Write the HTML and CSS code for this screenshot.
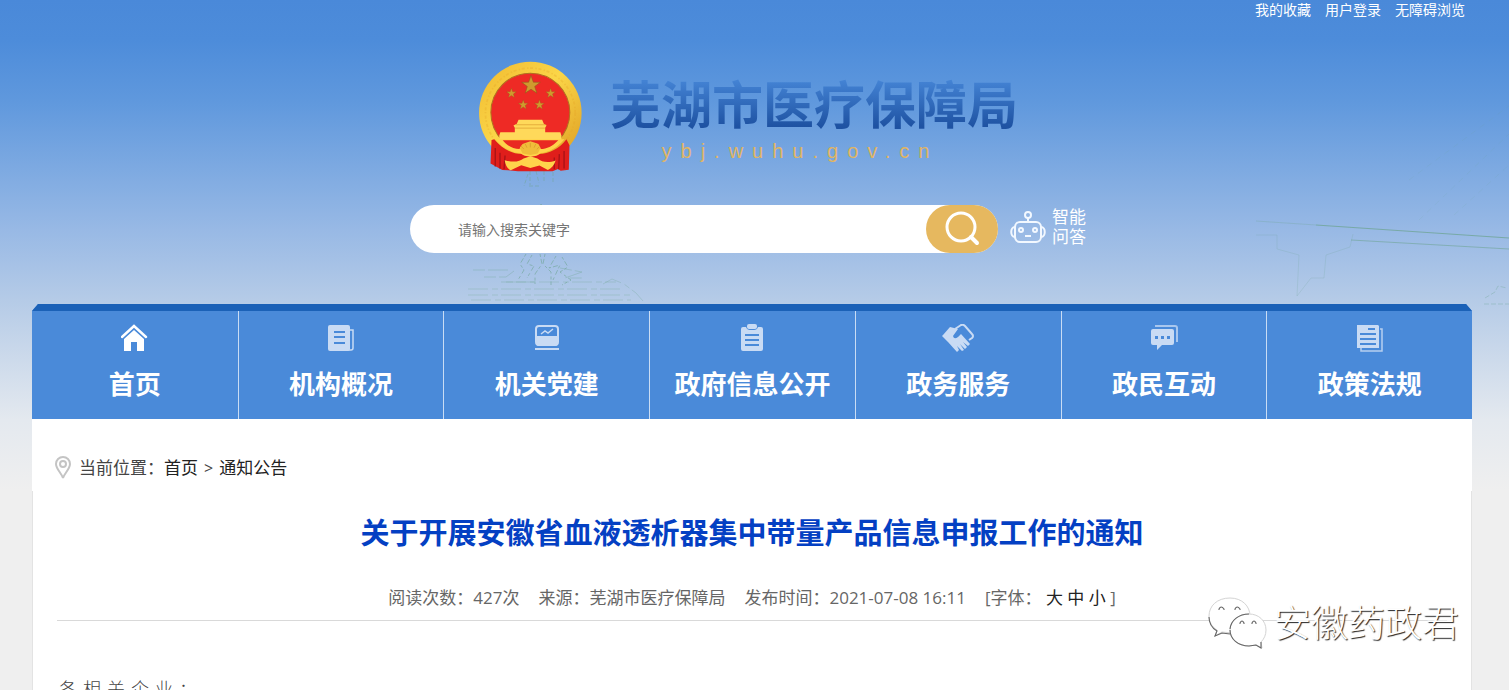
FILE: index.html
```html
<!DOCTYPE html>
<html lang="zh-CN">
  <head>
    <meta charset="UTF-8" />
    <title>芜湖市医疗保障局</title>
    <link rel="stylesheet" href="styles.css">
  </head>
  <body>
    <div class="page">
      <!-- faint line drawings behind the header -->
      <svg class="art art-tower" width="320" height="150" viewBox="0 0 320 150" fill="none" stroke="#6fa596" stroke-width="1" aria-hidden="true">
        <path d="M62 16v14M60 19l-4 12M68 16l3 12M61 31h10M76 16v10M85 17v12" stroke-dasharray="4 2" opacity=".5" />
        <path d="M73 49l-2 3h5z" fill="#6fa596" opacity=".5" />
        <path stroke-dasharray="3 2 5 3" d="M58 99l-6 10 4 6-6 10M64 100l-5 9 7 2-7 12M72 99l2 10-7 10v10M77 99l-2 10 8 8v13M88 101l-7 12 11-3-7 15M94 102l6 10-8 5 11 8-9 5" opacity=".6" />
        <path stroke-dasharray="12 3 25 5" d="M5 115h35M16 122h22l8-6M33 127h34M92 113l22 4-17 6h18" opacity=".35" />
        <path stroke-dasharray="20 4 6 3" d="M38 127h110M0 134h155M0 140h165M3 145h160M135 129l9-5 12 5 12 9 7 8" opacity=".3" />
      </svg>
      <svg class="art art-bridge" width="260" height="220" viewBox="0 0 260 220" fill="none" stroke="#6fa596" aria-hidden="true">
        <path d="M7 131l60 4" opacity=".3" />
        <path d="M67 135l193 13" opacity=".8" />
        <path d="M102 150l158 9" opacity=".6" />
        <path d="M7 145h21v14l22 6-2 41 14-18h13l2-23 24-8 3-13" opacity=".2" />
        <path d="M160 90l100-74M205 125l55-50M170 130l90-86" stroke-dasharray="6 5" opacity=".12" />
        <path d="M236 208l10-6 3-6 9 2M235 214h25" stroke-dasharray="5 2" opacity=".35" />
      </svg>

      <header class="header">
        <nav class="topbar">
          <a href="#">我的收藏</a>
          <a href="#">用户登录</a>
          <a href="#">无障碍浏览</a>
        </nav>

        <a class="brand" href="#">
          <svg class="emblem" width="104" height="112" viewBox="0 0 308 332">
            <defs>
              <linearGradient id="gold" x1="0" y1="0" x2="1" y2="1">
                <stop offset="0" stop-color="#f0b92f" />
                <stop offset=".45" stop-color="#fbd648" />
                <stop offset="1" stop-color="#dc9b20" />
              </linearGradient>
              <path id="star" d="M0-10L2.4-3.2 9.5-3 3.8 1.2 5.9 8 0 4-5.9 8-3.8 1.2-9.5-3-2.4-3.2z" />
            </defs>
            <circle cx="155" cy="154" r="152" fill="url(#gold)" />
            <circle cx="155" cy="154" r="133" fill="none" stroke="#e6a326" stroke-width="5" stroke-dasharray="9 7 4 5" opacity=".3" />
            <circle cx="155" cy="153" r="117" fill="#ee2a25" stroke="#b06f20" stroke-width="3" />
            <g fill="#cf9a2e" stroke="#8f5a1c" stroke-width=".6">
              <use href="#star" transform="translate(157 72) scale(2.9)" />
              <use href="#star" transform="translate(99 96) scale(1.5)" />
              <use href="#star" transform="translate(215 96) scale(1.5)" />
              <use href="#star" transform="translate(134 130) scale(1.5)" />
              <use href="#star" transform="translate(182 130) scale(1.5)" />
            </g>
            <path fill="#ffd95a" d="M120 174h70l5 12 8 5-4 7v13h45l3 10v13H63v-13l3-10h43v-13l-4-7 10-5z" />
            <path stroke="#d99a2d" stroke-width="2" d="M112 189h90M110 199h88" />
            <path fill="#e01e1b" d="M48 232c28 35 72 52 107 40 37 12 82-6 107-40l9 18-2 72-24 3-8-5-16 7H118l-29-3-17-1-35-19 3-70z" />
            <path fill="none" stroke="#a71317" stroke-width="4" d="M51 258v55M65 272v47M80 280l-3 41M255 267v52M241 276l-2 45M226 286v35" />
            <path fill="#ffd34b" d="M54 232h202c-20 25-47 39-70 41-12 14-48 14-61 0-30-3-56-20-71-41z" />
            <path fill="#e92922" d="M73 235h165c-17 18-35 26-52 26-3-12-11-18-31-18s-29 7-32 18c-21-1-38-11-50-26z" />
            <path fill="#f0bd3a" d="M132 246l10-4 13-4 14 4 10 4 6 12-8 16-22 5-23-5-8-15z" />
            <path fill="#ffd34b" d="M79 294c24 7 44 5 56-5l20-7 21 7c14 11 32 14 54 6-4 14-13 24-23 28l-25-13-27 7-27-8-31 15c-11-6-16-16-18-30z" />
            <path stroke="#d6952a" stroke-width="2" fill="none" d="M136 261l-9-9M145 257l-5-11M155 256v-13M166 257l5-11M174 262l9-9" />
          </svg>
          <span class="brand-text">
            <span class="brand-name">芜湖市医疗保障局</span>
            <span class="brand-url">ybj.wuhu.gov.cn</span>
          </span>
        </a>

        <div class="search-row">
          <form class="search" role="search">
            <input class="search-input" type="text" placeholder="请输入搜索关键字" aria-label="搜索关键字" />
            <button class="search-btn" type="button" aria-label="搜索">
              <svg width="36" height="36" viewBox="0 0 36 36" fill="none" stroke="#fff">
                <circle cx="17" cy="16" r="14" stroke-width="3" />
                <path d="M27 26l6 6" stroke-width="4" stroke-linecap="round" />
              </svg>
            </button>
          </form>
          <a class="robot" href="#">
            <svg width="36" height="34" viewBox="0 0 36 34" fill="none" stroke="#f2f8ff" stroke-width="2">
              <circle cx="18" cy="5" r="3" />
              <path d="M18 8v5" />
              <rect x="5" y="12" width="26" height="20" rx="5" />
              <path d="M5 17c-5 0-5 10 0 10M31 17c5 0 5 10 0 10M15 26h6" />
              <circle cx="11" cy="20" r="2" />
              <circle cx="25" cy="20" r="2" />
            </svg>
            <span>智能<br />问答</span>
          </a>
        </div>
      </header>

      <nav class="main-nav">
        <a class="nav-item" href="#">
          <svg width="28" height="28" viewBox="0 0 28 28">
            <path d="M1 13L13 2l12 11" fill="none" stroke="#fff" stroke-width="2.4" stroke-linecap="round" />
            <path d="M3 15L13 6l10 9v12h-7v-9h-6v9H3z" fill="#fff" />
          </svg>
          首页
        </a>
        <a class="nav-item" href="#">
          <svg width="28" height="28" viewBox="0 0 28 28">
            <rect x="1" y="1" width="22" height="26" rx="2" fill="#c9dbf4" />
            <path d="M7 8h11M7 13h11M7 19h11" stroke="#4a8ad9" stroke-width="2" />
            <path d="M22 6h4v18q0 2-2 2h-4" fill="none" stroke="#c9dbf4" stroke-width="1.5" />
          </svg>
          机构概况
        </a>
        <a class="nav-item" href="#">
          <svg width="28" height="28" viewBox="0 0 28 28">
            <rect x="3" y="2" width="22" height="19" rx="3" fill="none" stroke="#c9dbf4" stroke-width="2" />
            <path d="M3 12h22v7q0 3-3 3H6q-3 0-3-3zM2 24h24v2H2z" fill="#c9dbf4" />
            <path d="M8 10l4-3 3 2 5-4" fill="none" stroke="#c9dbf4" stroke-width="1.5" />
          </svg>
          机关党建
        </a>
        <a class="nav-item" href="#">
          <svg width="28" height="28" viewBox="0 0 28 28">
            <path d="M5 3h3q1 3 4 3h4q3 0 4-3h3q2 0 2 2v20q0 2-2 2H5q-2 0-2-2V5q0-2 2-2z" fill="#c9dbf4" />
            <rect x="9" y="0" width="10" height="5" rx="2" fill="#c9dbf4" />
            <path d="M7 11h14M7 16h14M7 21h14" stroke="#4a8ad9" stroke-width="2" />
          </svg>
          政府信息公开
        </a>
        <a class="nav-item" href="#">
          <svg width="32" height="28" viewBox="0 0 32 28">
            <path d="M1 11L8 3l8 2-5 7q1 4 5 1l3-3 9 10-2 2-5-4 4 5-2 2-5-5 4 6-2 1-5-5 2 4-2 2L6 18 0 12z" fill="#c9dbf4" />
            <path d="M13 5l6-4q2-1 4 1l7 8q2 2 0 4l-3 2" fill="none" stroke="#c9dbf4" stroke-width="2" />
          </svg>
          政务服务
        </a>
        <a class="nav-item" href="#">
          <svg width="28" height="28" viewBox="0 0 28 28">
            <path d="M5 2h20q2 0 2 2v14" fill="none" stroke="#a9c7ee" stroke-width="2" />
            <path d="M3 5h19q2 0 2 2v12q0 2-2 2H12l-5 5v-5H3q-2 0-2-2V7q0-2 2-2z" fill="#c9dbf4" />
            <path d="M5 12h3v3H5zM11 12h3v3h-3zM17 12h3v3h-3z" fill="#4a8ad9" />
          </svg>
          政民互动
        </a>
        <a class="nav-item" href="#">
          <svg width="28" height="28" viewBox="0 0 28 28">
            <path d="M24 5h2v22H5v-3" fill="none" stroke="#b7cff0" stroke-width="1.5" />
            <path d="M1 1h21l1 1v22H1z" fill="#c9dbf4" />
            <path d="M12 5h7M4 10h16M4 15h16M4 20h16" stroke="#4a8ad9" stroke-width="2" />
          </svg>
          政策法规
        </a>
      </nav>

      <div class="breadcrumb">
        <svg width="16" height="24" viewBox="0 0 16 24" fill="none" stroke="#c4c4c4">
          <path d="M8 22C7 18 1 13 1 8a7 7 0 0 1 14 0c0 5-6 10-7 14z" stroke-width="2" />
          <circle cx="8" cy="8" r="3" stroke-width="2" />
        </svg>
        <span>当前位置：</span>
        <a href="#">首页</a>
        <span class="sep">&gt;</span>
        <a href="#">通知公告</a>
      </div>

      <main class="article">
        <h1 class="article-title">关于开展安徽省血液透析器集中带量产品信息申报工作的通知</h1>
        <div class="article-meta">
          <span>阅读次数：427次</span>
          <span>来源：芜湖市医疗保障局</span>
          <span>发布时间：2021-07-08 16:11</span>
          <span class="font-size">[字体： <a href="#">大</a> <a href="#">中</a> <a href="#">小</a> ]</span>
        </div>
        <p class="article-text">各相关企业：</p>
      </main>

      <div class="watermark">
        <svg width="60" height="52" viewBox="0 0 60 52" aria-hidden="true">
          <g fill="#fff" stroke="#d4d4d4" stroke-width="1">
            <path d="M22 1C9 1 1 9 1 19c0 6 3 11 8 14l-2 6 7-4 10 1c12-1 18-8 18-17C42 9 34 1 22 1z" />
            <path d="M41 17c-11 0-19 7-19 16s8 16 19 16l7-1 6 3-1-6c3-3 5-7 5-12 0-9-7-16-17-16z" />
          </g>
          <g fill="none" stroke="#666" stroke-width="1.1">
            <path d="M1 20c0 6 3 11 8 14l-2 5 7-3 8 1M22 33c0 9 8 16 19 16l7-1 5 3v-6M22 32c1-9 9-15 19-15" />
            <path d="M11 13v-1q2-4 5 0v1M27 13v-1q2-4 5 0v1M32 27v-1q2-4 4 0v1M44 27v-1q2-4 4 0v1" />
          </g>
        </svg>
        安徽药政君
      </div>
    </div>
  </body>
</html>
```

FILE: styles.css
```css
* {
  margin: 0;
  padding: 0;
  box-sizing: border-box;
}

body {
  font-family: "Open Sans", "Noto Sans CJK SC", sans-serif;
  background-color: #efefef;
  color: #444;
}

a {
  color: inherit;
  text-decoration: none;
}

.page {
  position: relative;
  height: 100vh;
  overflow: hidden;
  padding: 0 37px 0 32px;
  background: linear-gradient(#4a89d9 0, #4d8cda 40px, #5f98dd 100px, #98b9e5 230px, #b5cbe7 300px, #e4e9ef 420px, #efefef 490px);
}

.art {
  position: absolute;
}

.art-tower {
  left: 468px;
  top: 155px;
}

.art-bridge {
  right: 0;
  top: 90px;
}

/* Header */
.header {
  position: relative;
  height: 304px;
}

.topbar {
  display: flex;
  justify-content: flex-end;
  gap: 14px;
  padding-right: 7px;
  height: 61px;
  font-size: 14px;
  line-height: 20px;
  color: #fff;
}

.brand {
  display: flex;
  justify-content: center;
  gap: 28px;
  height: 144px;
  padding-right: 8px;
}

.brand-text {
  display: flex;
  flex-direction: column;
  align-items: center;
  padding-top: 13px;
}

.brand-name {
  font-size: 51px;
  line-height: 60px;
  font-weight: bold;
  background: linear-gradient(#4382d3 12%, #1e52a2 88%);
  -webkit-background-clip: text;
  background-clip: text;
  color: transparent;
}

.brand-url {
  padding-right: 28px;
  font-family: "Liberation Sans", Arial, sans-serif;
  font-size: 20px;
  line-height: 34px;
  letter-spacing: 9px;
  color: #e0b563;
}

.search-row {
  display: flex;
  justify-content: center;
  gap: 12px;
  padding-right: 8px;
}

.search {
  display: flex;
  flex: 0 1 588px;
  height: 48px;
  background-color: #fff;
  border-radius: 24px;
}

.search-input {
  flex: 1;
  min-width: 0;
  padding-left: 48px;
  border: none;
  outline: none;
  background: none;
  font: inherit;
  font-size: 14px;
}

.search-input::placeholder {
  color: #757575;
}

.search-btn {
  display: flex;
  align-items: center;
  justify-content: center;
  width: 72px;
  border: none;
  border-radius: 24px;
  background-color: #e6b85f;
  cursor: pointer;
}

.robot {
  display: flex;
  align-items: center;
  gap: 6px;
  height: 44px;
  font-size: 17px;
  line-height: 20px;
  color: #fff;
}

/* Navigation */
.main-nav {
  position: relative;
  display: grid;
  grid-template-columns: repeat(7, 1fr);
  border-top: 7px solid #1b61b7;
  background-color: #4a8ad9;
  clip-path: polygon(6px 0, calc(100% - 6px) 0, 100% 7px, 100% 100%, 0 100%, 0 7px);
}

.nav-item {
  display: flex;
  flex-direction: column;
  align-items: center;
  gap: 12px;
  height: 108px;
  padding-top: 13px;
  font-size: 26px;
  line-height: 40px;
  font-weight: bold;
  color: #fff;
  white-space: nowrap;
}

.nav-item + .nav-item {
  border-left: 1px solid #c9dcf4;
}

/* Breadcrumb */
.breadcrumb {
  display: flex;
  align-items: center;
  height: 72px;
  padding: 26px 23px 0;
  background-color: #fff;
  font-size: 17px;
  line-height: 24px;
}

.breadcrumb svg {
  margin-right: 8px;
}

.breadcrumb a {
  color: #222;
}

.breadcrumb .sep {
  margin: 0 6px;
  font-size: 16px;
}

/* Article */
.article {
  min-height: 300px;
  padding: 18px 24px;
  border: 1px solid #e3e3e3;
  border-top: none;
  background-color: #fff;
}

.article-title {
  font-size: 29px;
  line-height: 48px;
  text-align: center;
  color: #0440c3;
}

.article-meta {
  display: flex;
  justify-content: center;
  gap: 19px;
  padding: 28px 0 10px;
  border-bottom: 1px solid #d9d9d9;
  font-size: 17px;
  line-height: 25px;
  color: #666;
}

.font-size a {
  color: #222;
}

.article-text {
  padding: 54px 2px 0;
  font-size: 18px;
  line-height: 28px;
  font-weight: 300;
  letter-spacing: 6px;
}

/* Account mark over the lower right corner */
.watermark {
  position: absolute;
  right: 50px;
  bottom: 40px;
  display: flex;
  align-items: center;
  gap: 6px;
  font-size: 37px;
  line-height: 54px;
  font-weight: 300;
  color: #fff;
  text-shadow: 1px 1px 1px #222;
}
```
